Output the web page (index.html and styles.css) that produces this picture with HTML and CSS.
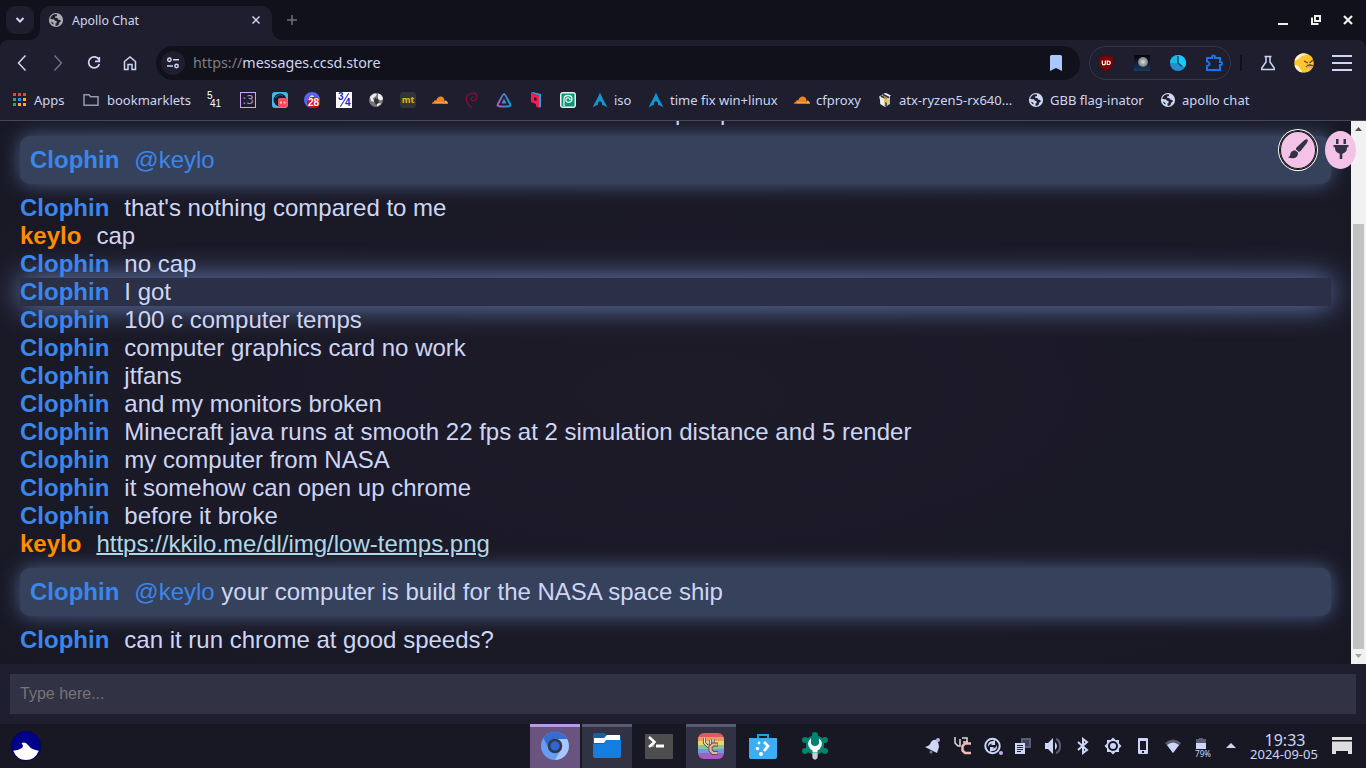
FILE: index.html
```html
<!DOCTYPE html>
<html lang="en">
<head>
<meta charset="utf-8">
<title>Apollo Chat</title>
<link rel="stylesheet" href="styles.css">
</head>
<body>
<svg class="defs" aria-hidden="true">
  <symbol id="globe" viewBox="0 0 16 16"><circle cx="8" cy="8" r="7.1" fill="currentColor"/><path d="M7 2.300C4.200 2.800 2.600 4.600 2.300 7l2.600.2c1.200 0 1.800.5 1.900 1.500l1.800.3v2.200H7.500v2.300c1 .4 2.300.1 3.200-.7l.4-2.100 1.700-1.200-.5-1.600-2.300-.5-.6-1.500-2.400-.2V4.400L9 4V2.500z" fill="#1e1e2e"/><path d="M2.800 9.400l2.600 1.300.1 1.800-1.400-.8z" fill="#1e1e2e"/></symbol>
  <symbol id="arch" viewBox="0 0 16 16"><path d="M8 .5C7 3 5.500 6.200 .5 15.300c2.400-1.400 4-2 5.300-2.300.1-2.500.9-3.700 2.200-3.700s2.100 1.200 2.200 3.700c1.300.3 3 1 5.300 2.300C10.500 6.200 9 3 8 .5z" fill="#1793d1"/></symbol>
  <symbol id="cloud" viewBox="0 0 16 16"><path d="M0 11.800c.2-1.500 1-2 2-2.100.1-1.200 1.200-1.700 2.200-1.200C5 6 6.700 4.600 8.800 4.600c2 0 3.400 1.400 3.600 3.500l-.4 3.700z" fill="#f6821f"/><path d="M11.700 11.800c.7-1.700.8-2.500 1-3.300 2-.1 3.300 1.200 3.300 3.300z" fill="#fbad41"/><path d="M3 10.700h8.500" stroke="#ffd0a0" stroke-width=".6"/></symbol>
</svg>

<header class="tabstrip">
  <button class="tab-search"><svg width="10" height="10" viewBox="0 0 10 10"><path d="M1.500 3 5 6.500 8.500 3" class="line w2"/></svg></button>
  <div class="tab">
    <svg class="tab-icon" width="16" height="16"><use href="#globe"/></svg>
    <span class="tab-title">Apollo Chat</span>
    <svg width="10" height="10" viewBox="0 0 10 10"><path d="m1.500 1.500 7 7m0-7-7 7" class="line"/></svg>
  </div>
  <svg class="new-tab" width="12" height="12" viewBox="0 0 12 12"><path d="M6 1v10M1 6h10" stroke="#6c7086" stroke-width="1.500"/></svg>
  <div class="window-buttons">
    <svg width="10" height="12" viewBox="0 0 10 12"><path d="M0 10h10" stroke="#eee" stroke-width="2"/></svg>
    <svg width="10" height="12" viewBox="0 0 10 12"><path d="M4 2h5v5H4zM1 3.500V10h6.500" fill="none" stroke="#eee" stroke-width="2"/></svg>
    <svg width="10" height="12" viewBox="0 0 10 12"><path d="m1 2 8 8m0-8-8 8" stroke="#eee" stroke-width="2.200"/></svg>
  </div>
</header>

<nav class="toolbar">
  <span class="slot"><svg width="18" height="18" viewBox="0 0 18 18"><path d="M12.500 1.500 5.500 9l7 7.500" class="line"/></svg></span>
  <span class="slot dim"><svg width="18" height="18" viewBox="0 0 18 18"><path d="m5.500 1.500 7 7.500-7 7.500" class="line"/></svg></span>
  <span class="slot"><svg width="16" height="16" viewBox="0 0 16 16"><path d="M13 4.800A5.500 5.500 0 1 0 13.400 9" class="line thin"/><path d="M13.300 2v4.300H9" class="line thin"/></svg></span>
  <span class="slot"><svg width="16" height="16" viewBox="0 0 16 16"><path d="M2.500 6.500 8 2l5.500 4.500v8H10v-5H6v5H2.500z" class="line"/></svg></span>
  <div class="omnibox">
    <span class="site-info"><svg width="12" height="12" viewBox="0 0 12 12"><circle cx="2.400" cy="2.800" r="1.700" class="line"/><path d="M6 2.800h6M0 9h6" class="line"/><circle cx="9.500" cy="9" r="1.700" class="line"/></svg></span>
    <span class="url"><span class="scheme">https://</span>messages.ccsd.store</span>
    <svg width="14" height="18" viewBox="0 0 14 18"><path d="M1 2.500Q1 1 2.500 1h9Q13 1 13 2.500V17l-6-3-6 3z" fill="#a8c7fa"/></svg>
  </div>
  <div class="extensions">
    <span class="slot"><svg width="16" height="16" viewBox="0 0 16 16"><path d="M8 0c2 1.500 4 2 7 2v5c0 4-2.500 7-7 9C3.500 14 1 11 1 7V2C4 2 6 1.500 8 0z" fill="#800000"/><path d="M4.300 5.500v3q0 1.300 1.500 1.300T7.300 8.500v-3M9.200 6h1q2 0 2 1.800T10.200 9.500h-1z" fill="none" stroke="#fff" stroke-width="1.200"/></svg></span>
    <span class="slot"><svg width="16" height="16" viewBox="0 0 16 16"><defs><linearGradient id="night" x2="0" y2="1"><stop stop-color="#050508"/><stop offset="1" stop-color="#173b61"/></linearGradient><radialGradient id="moon"><stop stop-color="#ddd"/><stop offset="1" stop-color="#777"/></radialGradient></defs><path fill="url(#night)" d="M0 0h16v16H0z"/><circle cx="9" cy="7" r="5" fill="url(#moon)"/></svg></span>
    <span class="slot"><svg width="16" height="16" viewBox="0 0 16 16"><circle cx="8" cy="8" r="8" fill="#2290cf"/><path d="M8 0a8 8 0 0 1 8 8 8 8 0 0 1-1.300 4.200L8 8z" fill="#14cdf5"/><path d="M8 0A8 8 0 0 0 0 8h8z" fill="#19b9e8"/><path d="M8 1v7l4 3.500" stroke="#153b65" fill="none" stroke-width="1.300"/></svg></span>
    <span class="slot"><svg width="18" height="18" viewBox="0 0 18 18"><path d="M2 4h5V3q0-1.500 1.500-1.500T10 3v1h5v4h.5Q17 8 17 9.500T15.500 11H15v5H2v-4q2.500-.5 2.500-2.200T2 7.500z" fill="none" stroke="#1a73e8" stroke-width="2"/></svg></span>
  </div>
  <span class="separator"></span>
  <span class="slot"><svg width="16" height="16" viewBox="0 0 16 16"><path d="M4.500 1.500h7M6 1.500v5.500l-4.200 6v1.500h12.400V13L10 7V1.500" class="line"/></svg></span>
  <span class="slot"><svg width="20" height="20" viewBox="0 0 20 20"><circle cx="10" cy="10" r="9.800" fill="#fdc52f"/><path d="M.5 8a9 9 0 0 1 5-6.500l3-1.300 5 .8-6 2L4 6.500zM.5 12l4 1 4 6.500q-6.500-1-8-7.500z" fill="#fff3d4"/><path d="m10 8 4 2M19 7l-3.500 3M12 14q3-3.500 7-1" stroke="#71420c" stroke-width="1.300" fill="none"/><path d="M12.500 13h6v2h-5z" fill="#c7b48b"/></svg></span>
  <span class="slot menu"><svg width="20" height="18" viewBox="0 0 20 18"><path d="M0 2h20M0 9h20M0 16h20" stroke="#cdd6f4" stroke-width="2"/></svg></span>
</nav>

<nav class="bookmarks">
  <span class="bookmark"><svg width="16" height="16" viewBox="0 0 16 16"><path d="M1 1h3v3H1zM6 1h3v3H6zM11 1h3v3h-3z" fill="#f44336"/><path d="M1 6h3v3H1z" fill="#34a853"/><path d="M6 6h3v3H6z" fill="#2196f3"/><path d="M11 6h3v3h-3zM6 11h3v3H6zM11 11h3v3h-3z" fill="#ffb300"/><path d="M1 11h3v3H1z" fill="#34a853"/></svg>Apps</span>
  <span class="bookmark folder"><svg width="16" height="14" viewBox="0 0 16 14"><path d="M1 12.300V1.700h5l1.600 2H15v8.600z" fill="none" stroke="#9399b2" stroke-width="1.500"/></svg>bookmarklets</span>
  <span class="bookmark five"><span>5</span><span>41</span></span>
  <span class="bookmark"><span class="cat">:3</span></span>
  <span class="bookmark"><svg width="16" height="16" viewBox="0 0 16 16"><rect width="16" height="16" rx="3" fill="#4ab5eb"/><circle cx="8" cy="8" r="6.500" fill="#10202c"/><path d="M3 6q4-5 8-2" stroke="#28607a" fill="none"/><rect x="6" y="6" width="9.500" height="9" rx="2" fill="#ff4b55"/><path d="M8 10.500h2m1.500 0h2" stroke="#ffc3c3" stroke-width="2"/></svg></span>
  <span class="bookmark"><span class="discord"><span class="badge">28</span></span></span>
  <span class="bookmark"><span class="fraction"><span>3</span><i></i><span>4</span></span></span>
  <span class="bookmark"><svg width="16" height="16" viewBox="0 0 16 16"><circle cx="8" cy="8" r="7" fill="#77777a"/><path d="M2 5q4-5 7-3L7 5 5 6l1 4-3-1zM10 1.500q5 1 5 6l-3 1-2-2zM9 12l3-1 1 1-4 2.500z" fill="#eee"/><path d="m6 9 1-3 3 1 1 3-3 3z" fill="#303035"/></svg></span>
  <span class="bookmark"><span class="mt">mt</span></span>
  <span class="bookmark"><svg width="16" height="16"><use href="#cloud"/></svg></span>
  <span class="bookmark"><svg width="16" height="16" viewBox="0 0 16 16"><path d="M7.500 15.500C2 11.500 1 6 4 3s8.500-2.500 9 1-2.800 5.700-4.700 4.500S7.500 5 10 5" fill="none" stroke="#8d0d37" stroke-width="1.200"/></svg></span>
  <span class="bookmark"><svg width="16" height="16" viewBox="0 0 16 16"><defs><linearGradient id="jelly"><stop stop-color="#aa5cc3"/><stop offset="1" stop-color="#00a4dc"/></linearGradient></defs><path d="M8 2q1 0 6 10 1 2-1 2.200-5 .8-10 0Q1 14 2 12 7 2 8 2z" fill="none" stroke="url(#jelly)" stroke-width="2"/><path d="m8 6.500 2.500 4.700q-2.500.8-5 0z" fill="url(#jelly)"/></svg></span>
  <span class="bookmark"><svg width="16" height="16" viewBox="0 0 16 16"><path d="m5 0 8 2v13l-2 .8V4L3 .8z" fill="#289dde"/><path d="m3 .8 8 3v12l-3-1.300V12l-5-2zM6 5v3l2.500 1V6z" fill="#ff174f" fill-rule="evenodd"/></svg></span>
  <span class="bookmark"><svg width="16" height="16" viewBox="0 0 16 16"><rect width="16" height="16" rx="3" fill="#f1f1e9"/><rect x="1.500" y="1.500" width="13" height="13" rx="1" fill="#009b7d"/><path d="M4 14V7q0-3.500 4-3.500t4 3.300-3 3.500-3-2.500T8.500 6t1 2" stroke="#f1f1e9" stroke-width="1.300" fill="none"/></svg></span>
  <span class="bookmark"><svg width="16" height="16"><use href="#arch"/></svg>iso</span>
  <span class="bookmark"><svg width="16" height="16"><use href="#arch"/></svg>time fix win+linux</span>
  <span class="bookmark"><svg width="16" height="16"><use href="#cloud"/></svg>cfproxy</span>
  <span class="bookmark"><svg width="16" height="16" viewBox="0 0 16 16"><path d="m3 4 5-3 5 3v8l-5 3-5-3z" fill="#c9c7c0"/><path d="m2 4 5 3v7l-3-2zM9 1l5 2.500-2 1.500-5-3z" fill="#eee"/><path d="m4 4 5 2.500V14M6 2.500l6 3" stroke="#333" fill="none" stroke-width="1.500"/><path d="m7 5 3 2v4l-2-1z" fill="#f5bd1a"/></svg>atx-ryzen5-rx640...</span>
  <span class="bookmark"><svg width="16" height="16"><use href="#globe"/></svg>GBB flag-inator</span>
  <span class="bookmark"><svg width="16" height="16"><use href="#globe"/></svg>apollo chat</span>
</nav>

<main class="chat">
  <div class="messages">
    <p class="message clipped"><span>p</span><span>p</span></p>
    <p class="message mention"><b class="clophin">Clophin</b><span class="at">@keylo</span></p>
    <p class="message"><b class="clophin">Clophin</b>that's nothing compared to me</p>
    <p class="message"><b class="keylo">keylo</b>cap</p>
    <p class="message"><b class="clophin">Clophin</b>no cap</p>
    <p class="message active"><b class="clophin">Clophin</b>I got</p>
    <p class="message"><b class="clophin">Clophin</b>100 c computer temps</p>
    <p class="message"><b class="clophin">Clophin</b>computer graphics card no work</p>
    <p class="message"><b class="clophin">Clophin</b>jtfans</p>
    <p class="message"><b class="clophin">Clophin</b>and my monitors broken</p>
    <p class="message"><b class="clophin">Clophin</b>Minecraft java runs at smooth 22 fps at 2 simulation distance and 5 render</p>
    <p class="message"><b class="clophin">Clophin</b>my computer from NASA</p>
    <p class="message"><b class="clophin">Clophin</b>it somehow can open up chrome</p>
    <p class="message"><b class="clophin">Clophin</b>before it broke</p>
    <p class="message"><b class="keylo">keylo</b><a href="#">https://kkilo.me/dl/img/low-temps.png</a></p>
    <p class="message mention"><b class="clophin">Clophin</b><span class="at">@keylo</span> your computer is build for the NASA space ship</p>
    <p class="message"><b class="clophin">Clophin</b>can it run chrome at good speeds?</p>
  </div>
  <div class="scrollbar">
    <svg width="15" height="15" viewBox="0 0 15 15"><path d="m4 10 3.500-4 3.500 4z" fill="#505050"/></svg>
    <span class="thumb"></span>
    <svg width="15" height="15" viewBox="0 0 15 15"><path d="m4 5 3.500 4L11 5z" fill="#a3a3a3"/></svg>
  </div>
  <div class="actions">
    <button class="brush"><svg width="20" height="20" viewBox="0 0 20 20"><path d="M19.500.5q1 1-1 4L13 11.500q-1 1.300-2.300 1.200L8 10.500Q7.500 9.500 9 8l7-6.500Q18.500-.3 19.500.5z" fill="#313244"/><path d="m7 11.300 3 2.300q.3 5.200-4.700 5.700-3 .3-5.300-1.100 1.800-.3 2-2 .8-4.700 5-4.900z" fill="#313244"/></svg></button>
    <button class="plug"><svg width="16" height="20" viewBox="0 0 16 20"><path d="M3 0h2.500v5H3zM10.500 0H13v5h-2.500zM.5 6h15v2.300H14q.2 5.200-4.700 6.500V20H6.700v-5.200Q1.800 13.500 2 8.300H.5z" fill="#313244"/></svg></button>
  </div>
</main>

<div class="composer"><input type="text" placeholder="Type here..."></div>

<footer class="taskbar">
  <svg class="start" width="32" height="32" viewBox="0 0 32 32"><circle cx="16" cy="16" r="15" fill="#00008b" stroke="#111" stroke-width=".6"/><path d="M3.200 20.700Q9 20 12 18q2-2.500-.5-4.500Q15 11 18.500 15.500q3 4.500 10.300 5.200Q25 30 16 30T3.200 20.700z" fill="#fff"/></svg>
  <div class="tasks">
    <span class="task current"><svg width="28" height="28" viewBox="0 0 28 28"><circle cx="14" cy="14" r="14" fill="#669df6"/><path d="M2.500 6A14 14 0 0 1 26 7H14a7 7 0 0 0-6.500 9z" fill="#346bd5"/><path d="M26 7A14 14 0 0 1 14 28l6.500-11q1.500-6-3-10z" fill="#a7c8ff"/><circle cx="14" cy="14" r="6" fill="#2f66d0" stroke="#343745" stroke-width="2.500"/></svg></span>
    <span class="task open"><svg width="28" height="26" viewBox="0 0 28 26"><path d="M0 2q0-2 2-2h9l3 2h12q2 0 2 2v7H0z" fill="#1d6297"/><path d="M1 5h10l3-3h13v8H1z" fill="#fff"/><path d="M0 11h10l3-4h15v16q0 2-2 2H2q-2 0-2-2z" fill="#147de0"/></svg></span>
    <span class="task"><svg width="28" height="26" viewBox="0 0 28 26"><rect y="1" width="28" height="25" rx="1" fill="#4d4d4d"/><path d="m4 14 5 0 1-4z" fill="#999"/><path d="m4 4 5.500 5L4 14" stroke="#fff" stroke-width="2.500" fill="none"/><path d="M11 13h8" stroke="#fff" stroke-width="3"/></svg></span>
    <span class="task open"><svg width="26" height="26" viewBox="0 0 26 26"><defs><clipPath id="round"><rect width="26" height="26" rx="6"/></clipPath></defs><g clip-path="url(#round)"><path fill="#e15767" d="M0 0h26v5H0z"/><path fill="#ed9b61" d="M0 4h26v5H0z"/><path fill="#ead573" d="M0 8h26v5H0z"/><path fill="#89c58c" d="M0 12h26v5H0z"/><path fill="#6b9cde" d="M0 16h26v5H0z"/><path fill="#a45dc0" d="M0 20h26v6H0z"/></g><path d="M6.500 5v5l3 3h3V7M15 6v5" stroke="#4b3e49" stroke-width="3" fill="none"/><path d="M6.500 5v5l3 3h3V7M15 6v5" stroke="#e9dfd5" stroke-width="1.500" fill="none"/><path d="M20 11.500h-5l-2.500 2.500v3.500l2.500 2.500h5" stroke="#72464c" stroke-width="4" fill="none"/><path d="M19.500 11.500H15L12.500 14v3.500L15 20h4.500" stroke="#eab0a9" stroke-width="2.200" fill="none"/></svg></span>
    <span class="task"><svg width="28" height="26" viewBox="0 0 28 26"><path d="M9 7V2h10v5" fill="none" stroke="#239ceb" stroke-width="2"/><path d="M0 5h28v19q0 2-2 2H2q-2 0-2-2z" fill="#3daef5"/><path d="m15 9 4 4-4 5" stroke="#fff" stroke-width="2.800" fill="none"/><g fill="#fff"><circle cx="10" cy="10" r="1.400"/><circle cx="8.500" cy="15.500" r="1.700"/><circle cx="12" cy="21" r="2"/></g></svg></span>
    <span class="task"><svg width="28" height="28" viewBox="0 0 28 28"><path d="m14 2 9 5v12l-9 5-9-5V7z" fill="#00836f"/><g fill="#00836f"><circle cx="14" cy="3" r="3"/><circle cx="4" cy="8" r="3"/><circle cx="24" cy="8" r="3"/><circle cx="4" cy="19" r="3"/><circle cx="24" cy="19" r="3"/><circle cx="14" cy="23" r="3"/></g><path d="M10 6.500q-4 3-2.500 7.500 1 3 4 4.500v2h5v-2q3-1.500 4-4.500 1.500-4.500-2.500-7.500v5q-1 2.500-4 2.500t-4-2.500z" fill="#fff"/><path d="M11.500 21h5v5q-2.500 3.500-5 0z" fill="#ccc"/></svg></span>
  </div>
  <div class="tray">
    <span><svg width="18" height="18" viewBox="0 0 18 18"><path d="M1 10q5-1 6-5 2-3 6-2 2 4 2 7l-2 6z" fill="#cdd6f4"/><circle cx="7" cy="15" r="1.500" fill="#777d95"/><circle cx="14" cy="3" r="2" fill="#cba6f7"/></svg></span>
    <span><svg width="18" height="18" viewBox="0 0 18 18"><path d="M1 0v6l3 3h2V2M8 1h5v4M9 5h5" stroke="#ddd" stroke-width="1.500" fill="none"/><path d="M17 6.500h-6L8.500 9v4.500l2.500 2.500h6" stroke="#efbbb5" stroke-width="2.500" fill="none"/></svg></span>
    <span><svg width="20" height="18" viewBox="0 0 20 18"><circle cx="9.500" cy="9" r="7.200" class="line w2"/><path d="M5 10q-.5-6 5-6l2-1v5H8l1.500-1.500Q6.500 6.500 5 10zM14 8q.5 6-5 6l-2 1v-5h4l-1.500 1.500q3 0 4.500-3.500z" fill="#cdd6f4"/><circle cx="18" cy="16" r="2" fill="#cba6f7"/></svg></span>
    <span><svg width="16" height="16" viewBox="0 0 16 16"><path fill="#5a5d72" d="M6 0h10v10H6z"/><path d="M8 3h6M8 5h6M8 7h6" stroke="#252535"/><path d="M0 5h10v11H0z" fill="#cdd6f4"/><path d="M2 7.500h6m-6 2h6m-6 2h6m-6 2h4" stroke="#25263a"/></svg></span>
    <span><svg width="18" height="18" viewBox="0 0 18 18"><path d="M1 6h3l5-5v16l-5-5H1zM11 5q4 4 0 8z" fill="#cdd6f4"/><path d="M12 2q4 1 4 7t-4 7" fill="none" stroke="#5a5d72" stroke-width="2"/></svg></span>
    <span><svg width="16" height="18" viewBox="0 0 16 18"><path d="m3 5 9 8-4 3V2l4 3-9 8" class="line w2"/></svg></span>
    <span><svg width="18" height="18" viewBox="0 0 18 18"><path d="m9 .5 2.500 2.500H15v3.500L17.500 9 15 11.500V15h-3.500L9 17.500 6.500 15H3v-3.500L.5 9 3 6.500V3h3.500z" fill="#cdd6f4"/><circle cx="9" cy="9" r="5" fill="#181825"/><circle cx="9" cy="9" r="3" fill="#cdd6f4"/></svg></span>
    <span><svg width="10" height="16" viewBox="0 0 10 16"><rect width="10" height="16" rx="1" fill="#cdd6f4"/><path d="M2 3h6v9H2zM4 13h2v2H4z" fill="#181825"/></svg></span>
    <span><svg width="16" height="14" viewBox="0 0 16 14"><path d="M0 4q8-7 16 0l-8 10z" fill="#5a5d72"/><path d="M2 6q6-5 12 0l-6 8z" fill="#cdd6f4"/></svg></span>
    <span class="battery"><svg width="10" height="11" viewBox="0 0 10 11"><path d="M0 1h3V0h4v1h3v5H0z" fill="#5a5d72"/><path d="M0 5h10v6H0z" fill="#cdd6f4"/></svg><small>79%</small></span>
    <span class="expand"><svg width="10" height="6" viewBox="0 0 10 6"><path d="m0 5 5-5 5 5z" fill="#cdd6f4"/></svg></span>
  </div>
  <div class="clock"><span class="time">19:33</span><span class="date">2024-09-05</span></div>
  <svg class="desktop" width="20" height="18" viewBox="0 0 20 18"><path d="M0 0h20v3H0zM0 4.500h20V17h-4v-3H4v3H0z" fill="#dedede"/></svg>
</footer>
</body>
</html>
```
FILE: styles.css
```css
* { box-sizing: border-box; }

body {
  display: flex;
  flex-direction: column;
  width: 1366px;
  height: 768px;
  margin: 0;
  overflow: hidden;
  background: #11111b;
  color: #cdd6f4;
  font: 13px "Noto Sans", sans-serif;
}

svg { display: block; flex: none; }
button { border: 0; padding: 0; display: grid; place-items: center; }

.defs { display: none; }
.line { fill: none; stroke: #cdd6f4; stroke-width: 1.5; }
.thin { stroke-width: 1.7; }
.w2 { stroke-width: 2; }

/* Tab strip */
.tabstrip { display: flex; align-items: center; height: 40px; }
.tab-search { width: 28px; height: 28px; margin-left: 6px; border-radius: 9px; background: #1e1e2e; }
.tab {
  position: relative;
  display: flex;
  align-items: center;
  align-self: flex-end;
  width: 232px;
  height: 34px;
  margin-left: 6px;
  padding: 0 11px 6px 8px;
  border-radius: 10px 10px 0 0;
  background: #1e1e2e;
  font-size: 12.4px;
}
.tab::before, .tab::after {
  content: "";
  position: absolute;
  bottom: 0;
  width: 10px;
  height: 10px;
}
.tab::before { left: -10px; background: radial-gradient(circle at 0 0, transparent 9.5px, #1e1e2e 10px); }
.tab::after { right: -10px; background: radial-gradient(circle at 100% 0, transparent 9.5px, #1e1e2e 10px); }
.tab-icon { color: #a9abb0; }
.tab-title { flex: 1; margin-left: 8px; }
.new-tab { margin-left: 14px; }
.window-buttons { display: flex; gap: 22.5px; margin: 0 13px 0 auto; }

/* Toolbar */
.toolbar {
  display: flex;
  align-items: center;
  height: 46px;
  padding: 0 6px 0 4px;
  border-radius: 8px 8px 0 0;
  background: #1e1e2e;
}
.slot { display: grid; flex: none; place-items: center; width: 36px; height: 34px; }
.dim { opacity: .45; }
.omnibox {
  display: flex;
  flex: 1;
  align-items: center;
  height: 34px;
  margin: 0 9px 0 8px;
  padding: 0 17px 0 5px;
  border-radius: 17px;
  background: #11111b;
}
.site-info { display: grid; place-items: center; width: 24px; height: 24px; border-radius: 50%; background: #1e1e2e; }
.url { flex: 1; margin-left: 8px; padding-bottom: 2px; font-size: 14.3px; }
.scheme { color: #7f7f84; }
.extensions {
  display: flex;
  justify-content: center;
  align-items: center;
  width: 142px;
  height: 34px;
  border: 1px solid #35364a;
  border-radius: 17px;
}
.separator { width: 2px; height: 16px; margin: 0 8px 0 9px; background: #11111b; }
.menu { margin-left: 2px; }

/* Bookmarks */
.bookmarks {
  display: grid;
  grid-template-columns: 71px 124px 33px repeat(11, 32px) 56px 146px 83px 151px 132px 1fr;
  align-items: center;
  height: 35px;
  padding: 0 0 6px 12px;
  border-bottom: 1px solid #45475a;
  background: #1e1e2e;
}
.bookmark { display: flex; align-items: center; gap: 6px; height: 18px; white-space: nowrap; }
.folder { gap: 8px; }
.five { display: block; font: 10px/8px "Liberation Sans", sans-serif; color: #fff; height: 16px; }
.five span { display: block; }
.five span + span { margin-left: 3px; }
.cat {
  width: 16px;
  height: 16px;
  border: 1px solid #cba6f7;
  color: #a88bce;
  font: 12px/14px "DejaVu Sans", sans-serif;
  text-align: center;
}
.discord { display: flex; justify-content: flex-end; align-items: flex-end; width: 16px; height: 16px; border-radius: 50%; background: radial-gradient(circle at 50% 38%, #d8dcff 20%, #5865f2 22%); }
.badge { width: 13px; height: 11px; border-radius: 5px; background: #d90a16; color: #fff; font: bold 10px/11px "Liberation Sans", sans-serif; text-align: center; }
.fraction { display: flex; width: 16px; height: 16px; background: #fff; color: #2525c9; font: bold 10px/9px "Liberation Sans", sans-serif; }
.fraction span:first-child { margin-left: 2px; }
.fraction span:last-child { margin-top: 6px; }
.fraction i { flex: none; width: 1px; height: 16px; margin: 0 0 0 .5px; background: #2525c9; transform: rotate(32deg); }
.mt { width: 16px; height: 16px; border-radius: 3px; background: #323437; color: #e2b714; font: bold 9px/15px "Noto Sans", sans-serif; text-align: center; }

/* Chat */
.chat {
  position: relative;
  display: flex;
  height: 543px;
  background: radial-gradient(ellipse, #1e1b29, #181825);
  font: 24px/28px "Liberation Sans", Arial, sans-serif;
}
.messages { flex: 1; padding: 0 20px 10px; overflow: hidden; }
.message { height: 28px; margin: 0; white-space: pre; }
.message b { margin-right: 15px; }
.clipped { margin-top: -23px; padding-left: 655px; }
.clipped span { display: inline-block; width: 45px; }
.mention {
  height: 48px;
  margin: 10px 0;
  padding: 10px;
  border-radius: 10px;
  background: #36415c;
  box-shadow: 0 0 20px #4f618c;
}
.active { background: #2b3046; box-shadow: 0 0 30px #6b88c4; }
.clophin, .at { color: #3b86ea; }
.keylo { color: #ff8c00; }
.message a { color: #add8e6; text-decoration-thickness: 2px; }

.scrollbar { display: flex; flex-direction: column; align-items: center; width: 15px; background: #f1f1f1; }
.thumb { flex: 1; width: 11px; margin-top: 88px; background: #c1c1c1; }

.actions { position: absolute; top: 10px; right: 10px; display: flex; gap: 9px; }
.actions button { height: 38px; border-radius: 50%; background: #f5c2e7; }
.actions svg { margin-bottom: 2px; }
.brush { width: 36px; box-shadow: inset 0 0 0 1px #101010, 0 0 0 1px #101010, 0 0 0 2px #fff; }
.plug { width: 31px; }

.composer { height: 60px; padding: 10px; background: #1e1e2e; }
.composer input {
  display: block;
  width: 100%;
  height: 40px;
  padding: 0 10px;
  border: 0;
  background: #313244;
  color: #cdd6f4;
  font: 16px "Liberation Sans", Arial, sans-serif;
}
.composer input::placeholder { color: #757575; }

/* Taskbar */
.taskbar { display: flex; align-items: center; height: 44px; background: #181825; }
.start { margin-left: 10px; }
.tasks { display: flex; gap: 2px; margin-left: 488px; }
.task { display: grid; place-items: center; width: 50px; height: 44px; padding-bottom: 3px; border-top: 3px solid transparent; }
.open { border-color: #575a70; background: #313244; }
.current { border-color: #b99ae5; background: #69547f; }
.tray { display: flex; margin-left: 78px; }
.tray > span { display: grid; place-items: center; width: 30px; height: 44px; }
.tray .battery { align-content: center; padding: 5px 4px 0 0; }
.battery small { margin-left: 4px; font-size: 8px; line-height: 10px; }
.tray .expand { padding-right: 4px; }
.clock { display: flex; flex-direction: column; align-items: center; width: 72px; }
.time { margin-left: 2px; font-size: 16px; line-height: 16px; }
.date { font-size: 13px; line-height: 13px; }
.desktop { margin-left: 12px; }
```
